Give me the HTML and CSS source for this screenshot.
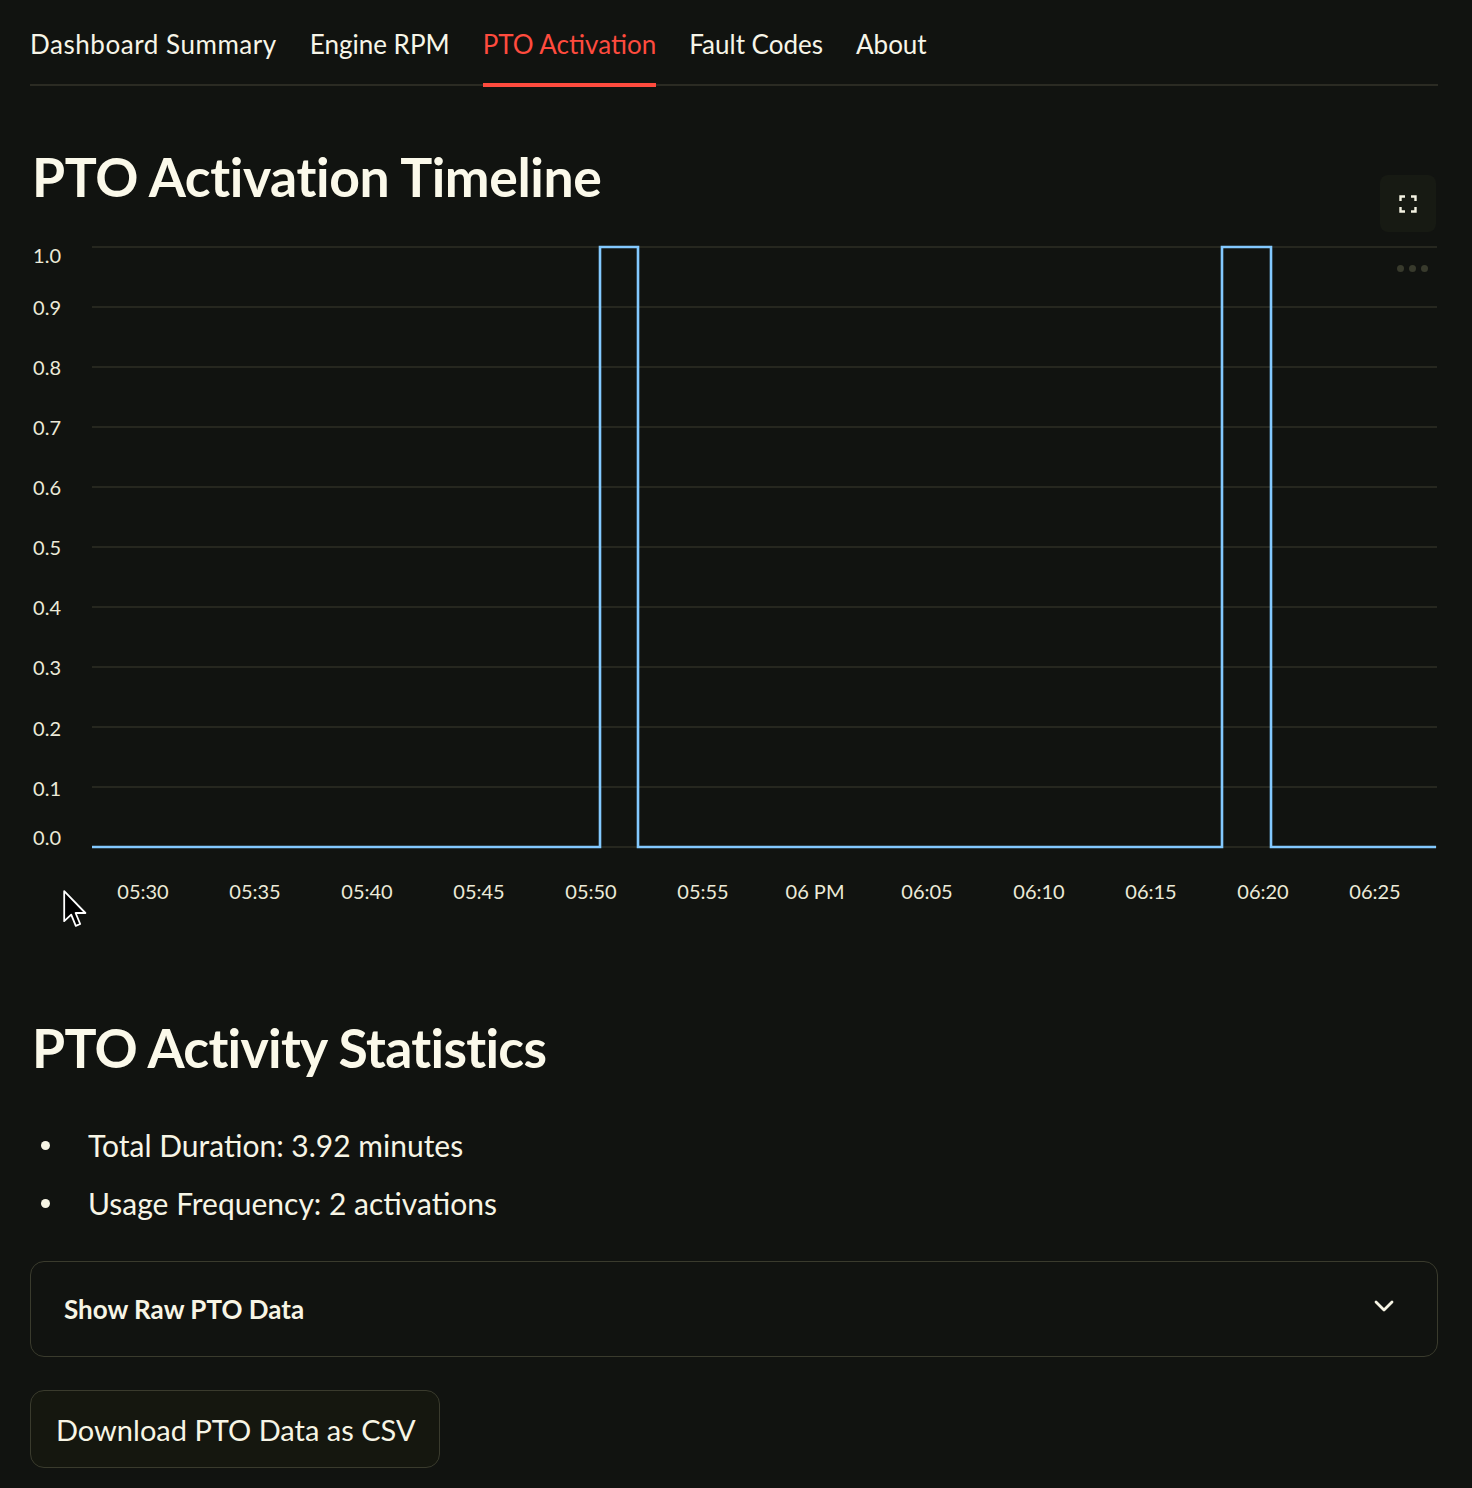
FILE: index.html
```html
<!DOCTYPE html>
<html lang="en">
<head>
<meta charset="utf-8">
<title>PTO Activation</title>
<link rel="stylesheet" href="styles.css">
</head>
<body>
<div class="page">
  <nav class="tabs">
    <div class="tab wide">Dashboard Summary</div>
    <div class="tab">Engine RPM</div>
    <div class="tab active">PTO Activation</div>
    <div class="tab">Fault Codes</div>
    <div class="tab">About</div>
  </nav>

  <h2 class="title">PTO Activation Timeline</h2>

  <div class="chart">
    <button class="fullscreen" aria-label="Fullscreen">
      <svg width="18" height="18" viewBox="0 0 18 18" fill="none" stroke="#f4f2e2" stroke-width="2.4">
        <path d="M1.5 6V1.5H6M12 1.5h4.5V6M16.5 12v4.5H12M6 16.5H1.5V12"/>
      </svg>
    </button>
    <div class="more"><span></span><span></span><span></span></div>
    <svg class="plot" width="1408" height="690" viewBox="30 230 1408 690">
      <g class="grid" stroke="#2e2f25" stroke-width="1.3">
        <line x1="92" x2="1437" y1="247" y2="247"/>
        <line x1="92" x2="1437" y1="307" y2="307"/>
        <line x1="92" x2="1437" y1="367" y2="367"/>
        <line x1="92" x2="1437" y1="427" y2="427"/>
        <line x1="92" x2="1437" y1="487" y2="487"/>
        <line x1="92" x2="1437" y1="547" y2="547"/>
        <line x1="92" x2="1437" y1="607" y2="607"/>
        <line x1="92" x2="1437" y1="667" y2="667"/>
        <line x1="92" x2="1437" y1="727" y2="727"/>
        <line x1="92" x2="1437" y1="787" y2="787"/>
        <line x1="92" x2="1437" y1="847" y2="847"/>
      </g>
      <g class="ylab" text-anchor="end" dominant-baseline="central">
        <text x="61" y="255">1.0</text>
        <text x="61" y="307">0.9</text>
        <text x="61" y="367">0.8</text>
        <text x="61" y="427">0.7</text>
        <text x="61" y="487">0.6</text>
        <text x="61" y="547">0.5</text>
        <text x="61" y="607">0.4</text>
        <text x="61" y="667">0.3</text>
        <text x="61" y="728">0.2</text>
        <text x="61" y="788">0.1</text>
        <text x="61" y="837">0.0</text>
      </g>
      <g class="xlab" text-anchor="middle" dominant-baseline="central">
        <text x="143" y="891">05:30</text>
        <text x="255" y="891">05:35</text>
        <text x="367" y="891">05:40</text>
        <text x="479" y="891">05:45</text>
        <text x="591" y="891">05:50</text>
        <text x="703" y="891">05:55</text>
        <text x="815" y="891">06 PM</text>
        <text x="927" y="891">06:05</text>
        <text x="1039" y="891">06:10</text>
        <text x="1151" y="891">06:15</text>
        <text x="1263" y="891">06:20</text>
        <text x="1375" y="891">06:25</text>
      </g>
      <polyline fill="none" stroke="#83c9ff" stroke-width="2.6" stroke-linejoin="miter"
        points="92,847 600,847 600,247 638,247 638,847 1222,847 1222,247 1271,247 1271,847 1436,847"/>
    </svg>
  </div>

  <h2 class="title stats">PTO Activity Statistics</h2>

  <ul class="list">
    <li>Total Duration: 3.92 minutes</li>
    <li>Usage Frequency: 2 activations</li>
  </ul>

  <div class="expander">
    <span class="exp-label">Show Raw PTO Data</span>
    <svg class="chev" width="22" height="14" viewBox="0 0 22 14" fill="none" stroke="#f6f4e4" stroke-width="2.8" stroke-linecap="round" stroke-linejoin="round">
      <path d="M3 3l8 8 8-8"/>
    </svg>
  </div>

  <button class="download">Download PTO Data as CSV</button>
</div>

<svg class="cursor" width="26" height="38" viewBox="0 0 13 19">
  <path d="M0.6 0.6V15.6L4.1 12.3L6.4 17.9L8.6 17L6.3 11.5H11.2Z" fill="#000" stroke="#fff" stroke-width="0.9" stroke-linejoin="round"/>
</svg>
</body>
</html>
```

FILE: styles.css
```css
* { box-sizing: border-box; }
html, body {
  margin: 0;
  padding: 0;
  background: #111310;
}
body {
  font-family: Lato, "Noto Sans", "Liberation Sans", sans-serif;
  color: #f7f5e5;
  position: relative;
  min-height: 1488px;
}
.page {
  padding: 0 34px 0 30px;
}
.tabs {
  display: flex;
  gap: 33px;
  border-bottom: 2px solid #2b2b23;
}
.tab {
  position: relative;
  padding-top: 24px;
  height: 84px;
  font-size: 26px;
  line-height: 40px;
  color: #f7f5e8;
  white-space: nowrap;
}
.tab.wide {
  letter-spacing: 0.55px;
}
.tab.active {
  color: #ff4b3e;
}
.tab.active::after {
  content: "";
  position: absolute;
  left: 0;
  right: 0;
  bottom: -3px;
  height: 4px;
  background: #ff4b3e;
}
.title {
  margin: 56px 0 0 2px;
  font-size: 53.5px;
  line-height: 68px;
  font-weight: 700;
  letter-spacing: -0.4px;
  color: #fbf9ea;
}
.chart {
  position: relative;
  margin-top: 20px;
  height: 690px;
}
.plot {
  display: block;
}
.ylab text, .xlab text {
  font-family: Lato, "Noto Sans", sans-serif;
  font-size: 20px;
  fill: #ecead8;
}
.fullscreen {
  position: absolute;
  left: 1350px;
  top: -55px;
  width: 56px;
  height: 57px;
  border: none;
  border-radius: 8px;
  background: #171a13;
  display: flex;
  align-items: center;
  justify-content: center;
  padding: 0;
}
.more {
  position: absolute;
  left: 1367px;
  top: 35px;
  display: flex;
  gap: 5px;
}
.more span {
  width: 7px;
  height: 7px;
  border-radius: 50%;
  background: #383a2c;
}
.stats {
  margin-top: 93px;
  letter-spacing: -0.7px;
}
.list {
  margin: 44px 0 0;
  padding: 0 0 0 58px;
  font-size: 30px;
  line-height: 41px;
  list-style: none;
}
.list li {
  position: relative;
  margin-bottom: 17px;
}
.list li::before {
  content: "";
  position: absolute;
  left: -47px;
  top: 16px;
  width: 9px;
  height: 9px;
  border-radius: 50%;
  background: #f7f5e5;
}
.expander {
  margin-top: 37px;
  height: 96px;
  border: 1.5px solid #3a3b2d;
  border-radius: 14px;
  display: flex;
  align-items: center;
  justify-content: space-between;
  padding: 0 42px 0 33px;
}
.exp-label {
  font-size: 26px;
  font-weight: 700;
}
.chev {
  display: block;
  margin-top: -6px;
}
.download {
  margin-top: 33px;
  width: 410px;
  height: 78px;
  border: 1.5px solid #3a3b2d;
  border-radius: 14px;
  background: #15170f;
  color: #f7f5e5;
  font-family: Lato, "Noto Sans", sans-serif;
  font-size: 29px;
  text-align: left;
  padding: 0 0 0 25px;
  display: block;
}
.cursor {
  position: absolute;
  left: 63px;
  top: 890px;
}
```
